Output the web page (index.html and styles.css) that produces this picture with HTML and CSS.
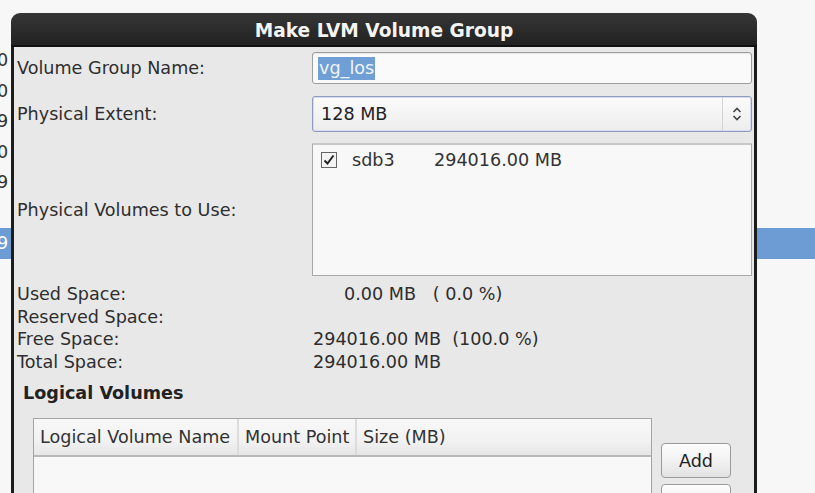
FILE: index.html
```html
<!DOCTYPE html>
<html>
<head>
<meta charset="utf-8">
<title>Make LVM Volume Group</title>
<link rel="stylesheet" href="styles.css">
</head>
<body>
<ul class="bglist">
  <li class="bgrow"><span class="num">0</span></li>
  <li class="bgrow"><span class="num">0</span></li>
  <li class="bgrow"><span class="num">9</span></li>
  <li class="bgrow"><span class="num">0</span></li>
  <li class="bgrow"><span class="num">9</span></li>
  <li class="bgrow"><span class="num"></span></li>
  <li class="bgrow sel"><span class="num">9</span></li>
</ul>

<div class="dialog">
  <div class="titlebar">Make LVM Volume Group</div>
  <div class="body">
    <div class="form">
      <div class="lbl">Volume Group Name:</div>
      <div class="entry"><span class="seltext">vg_los</span></div>

      <div class="lbl">Physical Extent:</div>
      <div class="combo">
        <span class="combo-text">128 MB</span>
        <span class="combo-arrow">
          <svg width="10" height="14" viewBox="0 0 10 14"><path d="M1.5 5 L5 1.5 L8.5 5" fill="none" stroke="#444" stroke-width="1.6"/><path d="M1.5 9 L5 12.5 L8.5 9" fill="none" stroke="#444" stroke-width="1.6"/></svg>
        </span>
      </div>

      <div class="lbl">Physical Volumes to Use:</div>
      <div class="pvlist">
        <div class="pvrow">
          <span class="check"><svg width="16" height="16" viewBox="0 0 16 16"><rect x="0.5" y="0.5" width="15" height="15" fill="#f4f4f4" stroke="#666"/><path d="M3.5 8.5 L6.5 11.5 L12.5 3.5" fill="none" stroke="#222" stroke-width="2"/></svg></span>
          <span class="pvname">sdb3</span>
          <span class="pvsize">294016.00 MB</span>
        </div>
      </div>
    </div>

    <div class="stats">
      <div class="slbl">Used Space:</div>
      <div class="sval used">0.00 MB&nbsp;&nbsp; ( 0.0 %)</div>
      <div class="slbl">Reserved Space:</div>
      <div class="sval"></div>
      <div class="slbl">Free Space:</div>
      <div class="sval">294016.00 MB&nbsp; (100.0 %)</div>
      <div class="slbl">Total Space:</div>
      <div class="sval">294016.00 MB</div>
    </div>

    <div class="lvhead">Logical Volumes</div>

    <div class="lv">
      <div class="table">
        <div class="thead">
          <div class="th c1">Logical Volume Name</div>
          <div class="th c2">Mount Point</div>
          <div class="th c3">Size (MB)</div>
        </div>
        <div class="tbody"></div>
      </div>
      <div class="buttons">
        <button class="btn">Add</button>
        <button class="btn">Edit</button>
      </div>
    </div>
  </div>
</div>
</body>
</html>
```

FILE: styles.css
```css
html, body {
  margin: 0;
  padding: 0;
}
body {
  background: #f7f7f7;
  font-family: "DejaVu Sans", "Noto Sans", sans-serif;
  font-size: 17.6px;
  color: #2e2e2e;
  height: 493px;
  overflow: hidden;
  position: relative;
}

.bglist {
  list-style: none;
  margin: 0;
  padding: 45px 0 0 0;
}
.bgrow {
  height: 30.5px;
  line-height: 30.5px;
  color: #333;
}
.num {
  display: inline-block;
  margin-left: -3px;
}
.bgrow.sel {
  background: #6c9cd3;
  color: #fff;
}

.dialog {
  position: absolute;
  left: 11px;
  top: 13px;
  width: 746px;
  height: 495px;
  display: flex;
  flex-direction: column;
}
.titlebar {
  height: 32px;
  line-height: 36px;
  background: linear-gradient(#363636, #2a2a2a 60%, #222);
  border-radius: 9px 9px 0 0;
  border-bottom: 2px solid #111;
  color: #f4f4f4;
  font-weight: bold;
  font-size: 18.6px;
  text-align: center;
}
.body {
  flex: 1;
  background: #e8e8e8;
  border-left: 3px solid #1c1c1c;
  border-right: 3px solid #1c1c1c;
  padding: 5px 2px 0 3px;
}

.form {
  display: grid;
  grid-template-columns: 295px 1fr;
  grid-template-rows: 32px 36px 133px;
  row-gap: 11.5px;
  align-items: center;
}
.lbl {
  color: #2e2e2e;
}
.entry {
  height: 30px;
  border: 1px solid #a09e9a;
  border-radius: 3px;
  background: #fafafa;
  box-shadow: inset 0 1px 1px rgba(0,0,0,0.08);
  display: flex;
  align-items: center;
  padding-left: 5px;
}
.seltext {
  background: #709fd5;
  color: #f0f4fa;
  padding: 1px 1px;
  line-height: 21px;
}
.combo {
  height: 34px;
  border: 1px solid #8f9cc0;
  border-radius: 3px;
  background: linear-gradient(#fbfbfb, #ededed);
  display: flex;
  align-items: center;
  box-shadow: inset 0 0 0 1px #d8dcee;
}
.combo-text {
  flex: 1;
  padding-left: 8px;
  color: #222;
}
.combo-arrow {
  width: 28px;
  height: 100%;
  border-left: 1px solid #d4d4d4;
  display: flex;
  align-items: center;
  justify-content: center;
}
.pvlist {
  align-self: stretch;
  border: 1px solid #a8a8a8;
  border-top: 2px solid #c8c8c8;
  background: #f8f8f8;
  padding: 5px 8px;
}
.pvrow {
  display: flex;
  align-items: center;
  height: 20px;
}
.check {
  width: 16px;
  height: 16px;
  display: inline-flex;
}
.pvname {
  margin-left: 15px;
  width: 82px;
  color: #333;
}
.pvsize {
  color: #333;
}

.stats {
  display: grid;
  grid-template-columns: 296px 1fr;
  line-height: 22.5px;
  margin-top: 7px;
}
.sval.used {
  padding-left: 31px;
}

.lvhead {
  font-weight: bold;
  margin: 9px 0 0 6px;
  line-height: 22px;
  color: #222;
}

.lv {
  display: flex;
  gap: 9px;
  margin-top: 14px;
  padding-left: 16px;
  padding-right: 21px;
}
.table {
  flex: 1;
  height: 120px;
  border: 1px solid #a4a4a4;
  border-bottom: none;
  background: #f8f8f8;
  display: flex;
  flex-direction: column;
}
.thead {
  display: flex;
  height: 36px;
  background: linear-gradient(#f8f8f8, #f2f2f2 60%, #e6e6e6);
  border-bottom: 2px solid #b8b8b8;
  align-items: stretch;
}
.th {
  display: flex;
  align-items: center;
  padding-left: 6px;
  color: #333;
  border-right: 2px solid #dcdcdc;
  white-space: nowrap;
}
.c1 { width: 197px; }
.c2 { width: 110px; }
.c3 { border-right: none; }
.tbody {
  flex: 1;
  background: #f8f8f8;
}

.buttons {
  width: 70px;
  display: flex;
  flex-direction: column;
  gap: 6px;
  padding-top: 25px;
}
.btn {
  height: 35px;
  border: 1px solid #9a9a9a;
  border-radius: 4px;
  background: linear-gradient(#fdfdfd, #efefef 60%, #e2e2e2);
  font-family: "DejaVu Sans", "Noto Sans", sans-serif;
  font-size: 17.6px;
  color: #222;
  padding: 0;
}
```
